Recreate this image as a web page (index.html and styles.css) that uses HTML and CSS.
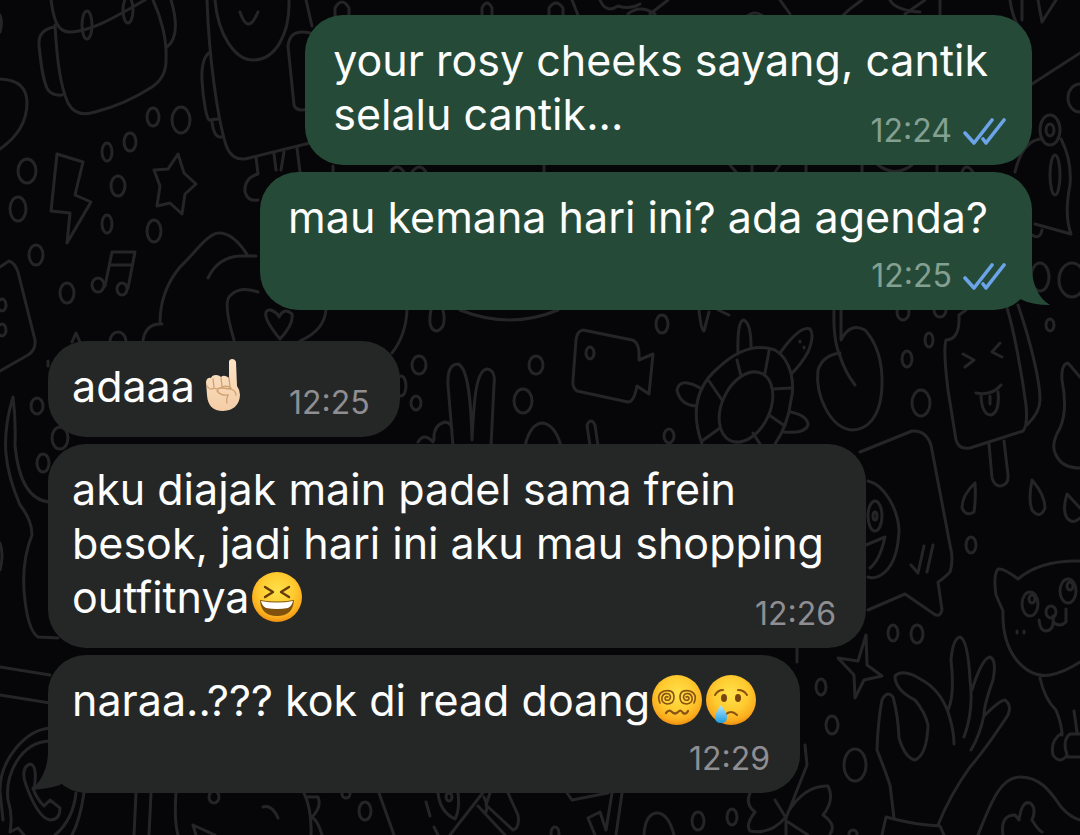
FILE: index.html
```
<!DOCTYPE html>
<html lang="id">
<head>
    <meta charset="UTF-8">
    <meta name="viewport" content="width=device-width, initial-scale=1.0">
    <title>Chat</title>
    <link rel="stylesheet" href="styles.css">
</head>
<body>
    <!-- doodle wallpaper -->
    <svg class="wallpaper" width="1080" height="835" viewBox="0 0 1080 835" aria-hidden="true">
        <!-- backpack, bolt, star, notes -->
        <path d="M51 0C54 22 58 33 72 32C95 30 120 14 145 0M55 25C57 60 60 85 68 103Q76 118 95 112C115 107 135 98 152 87Q167 77 166 58C167 38 160 15 153 0M54 27Q38 30 39 45C41 65 43 82 48 90Q53 96 62 95M171 0C177 20 178 38 167 47M0 79Q27 80 27 103Q27 130 0 149M0 15Q3 22 0 32"/>
        <path d="M57 154L83 162L75 195L91 202L67 243L70 213L51 211ZM178 154L184 173L196 184L185 194L182 214L170 203L157 206L160 186L154 170L168 169ZM105 286L112 252H135L128 288M110 265H131"/>
        <ellipse cx="87" cy="25" rx="5" ry="14"/><ellipse cx="128" cy="10" rx="5" ry="13"/>
        <ellipse cx="98" cy="285" rx="6" ry="7"/><ellipse cx="122" cy="289" rx="5" ry="6"/>
        <ellipse cx="153" cy="117" rx="6" ry="9"/><ellipse cx="181" cy="120" rx="9" ry="13"/><ellipse cx="130" cy="142" rx="6" ry="9"/><ellipse cx="107" cy="152" rx="5" ry="9"/>
        <ellipse cx="27" cy="171" rx="9" ry="12"/><ellipse cx="118" cy="186" rx="7" ry="10"/><ellipse cx="18" cy="209" rx="8" ry="12"/><ellipse cx="107" cy="224" rx="5" ry="9"/>
        <ellipse cx="154" cy="231" rx="7" ry="11"/><ellipse cx="36" cy="255" rx="7" ry="10"/><ellipse cx="67" cy="293" rx="7" ry="10"/><ellipse cx="118" cy="341" rx="8" ry="9"/>
        <!-- robot and camera -->
        <path d="M207 0C209 60 218 120 226 145Q231 160 245 159L310 143M215 0C218 35 235 60 253 60C275 60 290 35 289 0M240 12Q248 36 258 12M210 52Q201 58 202 80C203 100 207 120 209 120L218 119M212 122Q214 138 221 137M310 33Q290 28 288 46L294 105Q296 112 308 109M306 0L312 26M256 157L258 174Q244 178 245 192Q248 202 258 200M274 154L276 170M284 152L281 170M297 148L300 172"/>
        <path d="M160 323C160 305 165 285 180 267C195 253 208 233 219 233C230 233 240 243 248 256M208 278Q218 257 240 256H256M143 340Q146 323 162 324M234 340Q222 300 231 295Q240 286 258 292M280 339C260 315 265 309 271 310Q278 313 279 317Q284 307 292 314Q294 324 280 339M326 309Q325 330 300 341"/>
        <path d="M0 267L9 261Q15 263 18 272L35 340Q36 350 28 355L0 371M72 342L76 333L80 342M48 361V366"/>
        <ellipse cx="2" cy="305" rx="4" ry="6"/><ellipse cx="2" cy="330" rx="4" ry="6"/>
        <!-- top edge -->
        <path d="M335 18V8Q342 -4 349 8V18M482 18V8Q487 -2 492 8V18M549 18V8Q556 -2 563 8V18M572 0L578 15M600 0Q606 14 618 6Q630 10 640 4M628 14Q640 4 655 14M668 0L650 14M745 18Q755 8 765 18M780 0L790 14M840 18Q850 8 862 0M890 0Q895 10 920 12M925 0L905 14M940 0V15M1010 0Q1012 15 1018 26M1022 0V20M1038 0L1042 22L1056 0M1032 84L1080 53"/>
        <path d="M333 172V166M390 172Q397 162 404 172M412 172Q420 162 426 172M544 165V172M730 165L736 172M752 165V172M780 165L775 172M806 165V172M862 165V172M878 165Q895 178 912 165M937 165V172M962 172Q966 162 973 172"/>
        <!-- bell -->
        <path d="M1040 139Q1022 142 1015 172M1061 139Q1072 160 1070 185Q1064 215 1071 234L1035 224M1042 230Q1040 240 1032 235"/>
        <ellipse cx="1050" cy="130" rx="10" ry="15"/><ellipse cx="1050" cy="130" rx="4" ry="6"/><ellipse cx="1055" cy="175" rx="5" ry="20"/>
        <ellipse cx="1040" cy="277" rx="9" ry="14"/><ellipse cx="1072" cy="280" rx="13" ry="17"/><ellipse cx="1080" cy="98" rx="12" ry="14"/><ellipse cx="1050" cy="325" rx="4" ry="6"/>
        <!-- rabbit and video camera -->
        <path d="M407 310Q406 335 392 353M431 310Q427 330 437 331Q447 328 443 310M460 310Q510 330 558 310M453 446L448 385Q447 364 458 364C468 368 471 400 472 440C474 400 476 370 487 369Q496 370 494 385L491 446M418 442Q424 432 433 442M434 440Q433 425 445 422Q452 423 452 430M525 446Q530 424 542 423Q555 424 561 446M590 446L587 425Q591 417 595 425L598 446"/>
        <path d="M583 330L632 340Q640 342 639 360L653 354L649 394L637 386Q634 402 628 402L577 391Q572 388 573 380L576 340Q577 331 583 330ZM699 310Q701 330 704 331L709 312M718 310L729 315"/>
        <ellipse cx="419" cy="365" rx="7" ry="9"/><ellipse cx="401" cy="386" rx="5" ry="10"/><ellipse cx="416" cy="403" rx="5" ry="7"/><ellipse cx="536" cy="365" rx="7" ry="9"/>
        <ellipse cx="523" cy="401" rx="9" ry="12"/><ellipse cx="662" cy="324" rx="6" ry="9"/><ellipse cx="669" cy="436" rx="5" ry="7"/><ellipse cx="590" cy="353" rx="4" ry="6"/>
        <!-- turtle -->
        <path d="M702 444C690 410 698 385 718 368C735 352 755 343 775 350C792 360 795 385 791 400Q788 425 775 444M709 381L722 400M737 360L741 376M769 351L765 373M773 389L791 388M769 415L785 426M753 433L760 444M702 441L720 428M702 389Q680 376 677 390Q680 405 696 406M738 354Q737 320 744 320Q751 324 751 346M780 353Q800 325 810 329Q815 335 808 352Q800 366 792 373M791 412Q808 416 808 425Q805 434 784 432M800 341V342M804 347V348"/>
        <ellipse cx="746" cy="407" rx="24" ry="37" transform="rotate(25 746 407)"/>
        <!-- cherry and popsicle -->
        <path d="M834 310Q833 340 840 356Q845 372 855 385M841 310V340Q850 322 865 330Q883 350 882 385C881 420 865 430 852 430C830 428 815 395 818 370Q823 355 840 353"/>
        <path d="M966 310L959 315Q960 340 946 340Q943 350 948 390L956 440Q959 450 970 448L1023 431Q1028 425 1026 405C1022 375 1014 330 1007 308M1018 305C1030 340 1040 380 1040 400Q1040 412 1027 425M963 354L974 360L965 367M1000 343L992 352L1002 357M976 393Q992 396 1001 385M981 396Q982 415 991 415Q1000 412 998 392M990 396V404M989 444L992 478Q995 487 1001 486Q1009 484 1008 475L1004 441"/>
        <path d="M1080 377L1068 363Q1061 364 1062 380Q1068 410 1060 428Q1050 445 1056 455Q1062 468 1080 468M975 483Q962 495 962 508Q966 517 974 512Q976 500 975 483M1032 480Q1028 500 1032 510Q1040 520 1045 508Q1045 495 1032 480M1080 508L1067 494Q1062 510 1067 518Q1073 525 1080 518"/>
        <ellipse cx="907" cy="359" rx="5" ry="8"/><ellipse cx="929" cy="340" rx="4" ry="7"/><ellipse cx="921" cy="403" rx="9" ry="13"/><ellipse cx="903" cy="312" rx="6" ry="8"/><ellipse cx="940" cy="310" rx="6" ry="7"/><ellipse cx="971" cy="545" rx="5" ry="8"/>
        <!-- card with face -->
        <path d="M860 452L912 431Q926 430 931 445L950 545Q954 560 950 572Q942 580 938 582L942 610Q940 618 934 614L905 594L868 610M868 481C885 485 898 510 899 530Q898 560 885 572Q876 580 868 577M866 545L885 537Q880 560 870 568M911 565L918 573L924 546M927 572L933 545"/>
        <ellipse cx="875" cy="516" rx="7" ry="15"/><ellipse cx="875" cy="516" rx="2" ry="4"/>
        <!-- sparkle and hand -->
        <path d="M866 635L867 665L882 676L864 680L855 698L854 675L838 658L858 661ZM797 646V662"/>
        <path d="M894 818L890 785Q885 770 877 750Q878 720 882 700Q887 690 893 697Q898 715 899 738Q905 758 915 760Q927 755 928 725Q925 712 915 700Q895 690 895 676Q903 668 922 680Q940 690 948 712Q954 730 954 744M948 710Q955 695 951 660Q953 638 960 637Q968 640 970 680Q974 710 964 737M972 690Q982 658 990 657Q997 660 993 680Q984 705 984 715Q980 735 971 750M984 716Q1000 700 1005 700Q1012 705 1008 715Q985 750 970 767Q950 795 938 825M882 835L886 817Q915 825 940 826L944 835"/>
        <ellipse cx="893" cy="633" rx="5" ry="8"/><ellipse cx="917" cy="634" rx="6" ry="9"/><ellipse cx="821" cy="687" rx="5" ry="8"/><ellipse cx="832" cy="725" rx="6" ry="9"/><ellipse cx="855" cy="765" rx="11" ry="16"/><ellipse cx="853" cy="834" rx="4" ry="4"/>
        <!-- cat -->
        <path d="M1018 579Q1004 568 998 569Q993 575 996 595L1003 611Q1002 640 1015 658Q1030 678 1050 675Q1065 672 1080 662M1018 579Q1040 560 1080 561M1053 616Q1055 631 1045 631Q1040 630 1039 620M1053 622Q1060 628 1066 622V609M1017 631V633M1024 631V633M1040 678Q1045 700 1056 710Q1062 725 1062 735M1074 711L1077 732M1062 733Q1050 740 1053 755Q1060 765 1067 755Q1062 740 1070 734H1080M1066 757H1080"/>
        <ellipse cx="1030" cy="604" rx="8" ry="12"/><ellipse cx="1068" cy="591" rx="8" ry="12"/><ellipse cx="1051" cy="612" rx="5" ry="6"/><ellipse cx="1032" cy="599" rx="3" ry="4"/><ellipse cx="1070" cy="586" rx="3" ry="4"/>
        <!-- bottom right -->
        <path d="M978 835C990 805 1000 777 1020 777C1045 777 1055 800 1062 808Q1070 817 1080 820M1003 835Q1000 815 1015 815L1019 820Q1022 800 1030 803Q1037 808 1032 820Q1038 830 1042 832M788 812Q805 785 828 786Q835 800 823 815Q837 825 830 834M788 822L808 835M786 835V818L807 765L805 745M775 800L786 818"/>
        <!-- left side -->
        <path d="M13 397C0 440 5 470 20 505Q32 520 32 535Q22 560 24 590Q27 630 38 637L58 638M13 397Q16 420 15 445Q20 500 50 502M0 543Q4 555 0 570M0 667L50 675M0 695L50 703"/>
        <ellipse cx="37" cy="406" rx="6" ry="8"/><ellipse cx="60" cy="438" rx="8" ry="11"/><ellipse cx="43" cy="463" rx="6" ry="9"/>
        <path d="M50 728C25 730 0 760 0 790M50 741C20 742 5 775 8 800Q13 815 10 832L18 828L24 835M84 793Q80 820 72 835M76 793Q73 820 55 835M0 792L3 820M34 790Q38 765 30 764Q20 768 26 785Q38 818 50 820Q60 820 60 808L50 800L44 806Q36 798 33 788"/>
        <!-- bottom edge -->
        <path d="M136 793L134 835M151 793L149 835M176 793Q174 820 178 835M263 807Q272 804 278 818M193 825L215 835M193 825L196 835M304 793Q312 810 311 835M308 797H318Q322 807 312 817Q318 821 322 835M379 793L394 835M426 802L430 816M434 827L438 835M438 793Q440 812 455 819Q460 810 458 793M485 790L450 835M484 797Q488 805 486 812M478 806L505 835M490 793L486 805L513 830Q520 828 518 815L508 793M567 793L572 800L608 793M588 818L600 812L606 830L612 793M622 793L616 835M588 818L595 835M644 835Q645 815 656 813Q668 812 674 835M750 793Q745 805 755 812Q745 825 750 831Q770 835 785 818"/>
        <ellipse cx="214" cy="797" rx="5" ry="6"/><ellipse cx="365" cy="811" rx="6" ry="9"/><ellipse cx="346" cy="794" rx="4" ry="4"/><ellipse cx="449" cy="797" rx="3" ry="4"/><ellipse cx="698" cy="821" rx="6" ry="9"/><ellipse cx="732" cy="817" rx="5" ry="8"/><ellipse cx="555" cy="833" rx="4" ry="6"/>
    </svg>

    <!-- shared shapes -->
    <svg class="defs" width="0" height="0" aria-hidden="true">
        <defs>
            <radialGradient id="face" cx="50%" cy="38%" r="62%">
                <stop offset="0" stop-color="#ffe14a"/>
                <stop offset="0.55" stop-color="#fecb30"/>
                <stop offset="0.85" stop-color="#fbae1e"/>
                <stop offset="1" stop-color="#ee8f13"/>
            </radialGradient>
            <linearGradient id="tear" x1="0" y1="0" x2="0" y2="1">
                <stop offset="0" stop-color="#b5e8fa"/>
                <stop offset="1" stop-color="#1d9de0"/>
            </linearGradient>
            <linearGradient id="skin" x1="0" y1="0" x2="0" y2="1">
                <stop offset="0" stop-color="#fde3c5"/>
                <stop offset="1" stop-color="#f3cda7"/>
            </linearGradient>
            <symbol id="ticks" viewBox="0 0 44 28">
                <path d="M3 16L12 26L30 3M21 22L24 26L42 3" fill="none" stroke="#6ba4e9" stroke-width="3.6" stroke-linecap="round" stroke-linejoin="round"/>
            </symbol>
        </defs>
    </svg>

    <main class="chat">
        <div class="message sent inline-time">
            <p>your rosy cheeks sayang, cantik<br>selalu cantik...</p>
            <div class="meta"><time>12:24</time><svg class="ticks" role="img" aria-label="Read"><use href="#ticks"/></svg></div>
        </div>

        <div class="message sent last">
            <p>mau kemana hari ini? ada agenda?</p>
            <div class="meta"><time>12:25</time><svg class="ticks" role="img" aria-label="Read"><use href="#ticks"/></svg></div>
            <svg class="tail" viewBox="0 0 40 40" aria-hidden="true"><path d="M0 8L22 0C22 15 28 30 40 37Q22 37 10 31L0 22Z"/></svg>
        </div>

        <div class="message received short">
            <p>adaaa<svg class="emoji" viewBox="-5 2 50 50" role="img" aria-label="index finger up">
                <path d="M27 2Q28 0 30 0Q33 0 34 3L35 27Q38 31 38 36Q37 51 21 52Q6 52 5 36L4 23Q5 18 9 19Q10 16 14 16Q17 16 19 18Q22 15 27 19Z" fill="url(#skin)"/>
                <path d="M11 20L12 28M19 19L20 27M27 19L28 28M5 27Q8 32 12 29Q16 31 20 28Q25 26 29 29M16 32Q15 28 20 29L29 30Q34 32 34 36M15 32Q19 37 26 36Q24 41 25 44" fill="none" stroke="#cfa071" stroke-width="1.3" stroke-linecap="round"/>
            </svg></p>
            <div class="meta"><time>12:25</time></div>
        </div>

        <div class="message received inline-time">
            <p>aku diajak main padel sama frein<br>besok, jadi hari ini aku mau shopping<br>outfitnya<svg class="emoji" viewBox="0 0 50 50" role="img" aria-label="laughing">
                <circle cx="25" cy="25" r="25" fill="url(#face)"/>
                <path d="M13 15L21 20L13 25M37 15L29 20L37 25" fill="none" stroke="#653b0b" stroke-width="2.4" stroke-linecap="round" stroke-linejoin="round"/>
                <path d="M8 28Q25 31 42 28Q41 44 25 44Q9 44 8 28Z" fill="#80500d"/>
                <path d="M9 29Q25 32 41 29Q40 34 36 36Q25 38 14 36Q10 34 9 29Z" fill="#fff"/>
            </svg></p>
            <div class="meta"><time>12:26</time></div>
        </div>

        <div class="message received last">
            <p>naraa..??? kok di read doang<svg class="emoji" viewBox="0 0 50 50" role="img" aria-label="dizzy">
                <circle cx="25" cy="25" r="25" fill="url(#face)"/>
                <g fill="none" stroke="#875214" stroke-width="1.6" stroke-linecap="round">
                    <path d="M8 28Q4 19 12 16Q22 14 22 22Q22 29 15 29Q9 28 10 22Q12 17 17 19Q20 22 17 25Q13 26 13 23Q14 21 16 22"/>
                    <path d="M42 28Q46 19 38 16Q28 14 28 22Q28 29 35 29Q41 28 40 22Q38 17 33 19Q30 22 33 25Q37 26 37 23Q36 21 34 22"/>
                    <path d="M14 38Q17 34 20 37Q23 40 26 37Q29 34 31 38Q34 40 36 36" stroke-width="2.2"/>
                </g>
            </svg><svg class="emoji" viewBox="0 0 50 50" role="img" aria-label="crying">
                <circle cx="25" cy="25" r="25" fill="url(#face)"/>
                <path d="M9 20Q12 15 17 15M32 15Q38 15 41 20M19 40Q25 34 31 40" fill="none" stroke="#8b5012" stroke-width="2" stroke-linecap="round"/>
                <ellipse cx="18" cy="23" rx="3" ry="4" fill="#78450f"/><ellipse cx="32" cy="23" rx="3" ry="4" fill="#78450f"/>
                <path d="M15 30Q9 38 9 42Q9 48 15 48Q21 48 21 42Q21 38 15 30Z" fill="url(#tear)"/>
            </svg></p>
            <div class="meta"><time>12:29</time></div>
            <svg class="tail" viewBox="0 0 40 40" aria-hidden="true"><path d="M18 0C18 16 12 30 1 39Q18 38 30 34L40 24V0Z"/></svg>
        </div>
    </main>
</body>
</html>
```
FILE: styles.css
```
* {
    box-sizing: border-box;
}
body {
    margin: 0;
    min-height: 100vh;
    position: relative;
    overflow: hidden;
    background-color: #060608;
    color: #fcfdfc;
    font-family: Inter, "Liberation Sans", sans-serif;
}
.wallpaper {
    position: absolute;
    top: 0;
    left: 0;
    fill: none;
    stroke: #252527;
    stroke-width: 3;
    stroke-linecap: round;
    stroke-linejoin: round;
}
.defs {
    position: absolute;
}
.chat {
    position: relative;
    display: flex;
    flex-direction: column;
    gap: 7px;
    padding: 15px 48px 42px;
}
.message {
    position: relative;
    display: flex;
    flex-direction: column;
    gap: 18px;
    border-radius: 38px;
    font-size: 43px;
    line-height: 54px;
}
.message p {
    margin: 0;
    padding-bottom: 2px;
    white-space: nowrap;
}
.sent {
    align-self: flex-end;
    padding: 18px 26px 22px 28px;
    background-color: #264a38;
}
.sent p {
    margin-right: 18px;
}
.sent.last {
    margin-bottom: 24px;
}
.received {
    align-self: flex-start;
    padding: 18px 30px 22px 24px;
    background-color: #252726;
}
.received p {
    margin-right: 12px;
}
.meta {
    display: flex;
    align-items: center;
    align-self: flex-end;
    gap: 10px;
    height: 24px;
    font-size: 32px;
    line-height: 24px;
    color: #8e8e93;
}
.sent .meta {
    color: #84a092;
}
/* time sits on the last line of text */
.inline-time {
    gap: 0;
}
.inline-time .meta {
    margin-top: -24px;
}
.short {
    flex-direction: row;
    gap: 28px;
}
.ticks {
    width: 44px;
    height: 28px;
}
.emoji {
    width: 50px;
    height: 50px;
    margin: 0 2px;
    vertical-align: -9px;
    overflow: visible;
}
.tail {
    position: absolute;
    bottom: 2px;
    width: 40px;
    height: 40px;
}
.sent .tail {
    right: -18px;
    fill: #264a38;
}
.received .tail {
    left: -18px;
    fill: #252726;
}
```
